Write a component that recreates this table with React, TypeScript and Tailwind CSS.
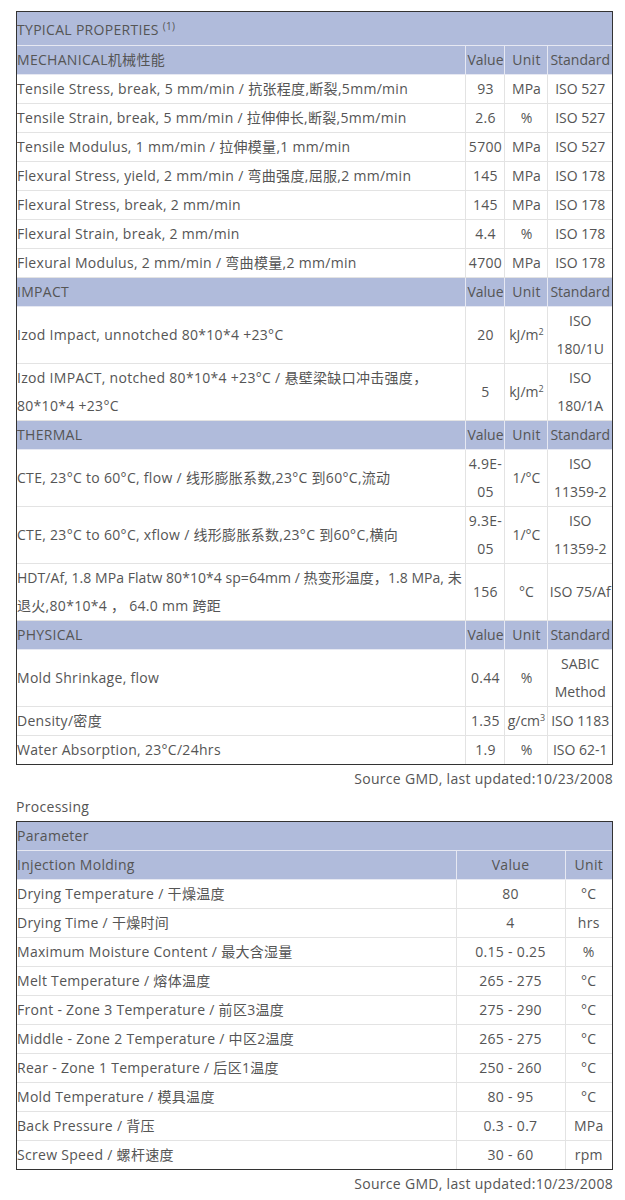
import React from 'react'

type Prop = { name: React.ReactNode; value: React.ReactNode; unit: React.ReactNode; std: React.ReactNode }

const font = { fontFamily: '"Open Sans", "Noto Sans CJK SC", sans-serif' }

const sections: { title: React.ReactNode; rows: Prop[] }[] = [
  {
    title: 'MECHANICAL机械性能',
    rows: [
      { name: 'Tensile Stress, break, 5 mm/min / 抗张程度,断裂,5mm/min', value: '93', unit: 'MPa', std: 'ISO 527' },
      { name: 'Tensile Strain, break, 5 mm/min / 拉伸伸长,断裂,5mm/min', value: '2.6', unit: '%', std: 'ISO 527' },
      { name: 'Tensile Modulus, 1 mm/min / 拉伸模量,1 mm/min', value: '5700', unit: 'MPa', std: 'ISO 527' },
      { name: 'Flexural Stress, yield, 2 mm/min / 弯曲强度,屈服,2 mm/min', value: '145', unit: 'MPa', std: 'ISO 178' },
      { name: 'Flexural Stress, break, 2 mm/min', value: '145', unit: 'MPa', std: 'ISO 178' },
      { name: 'Flexural Strain, break, 2 mm/min', value: '4.4', unit: '%', std: 'ISO 178' },
      { name: 'Flexural Modulus, 2 mm/min / 弯曲模量,2 mm/min', value: '4700', unit: 'MPa', std: 'ISO 178' },
    ],
  },
  {
    title: 'IMPACT',
    rows: [
      { name: 'Izod Impact, unnotched 80*10*4 +23°C', value: '20', unit: <>kJ/m<sup className="text-[9px]">2</sup></>, std: <>ISO<br />180/1U</> },
      { name: <>Izod IMPACT, notched 80*10*4 +23°C / 悬壁梁缺口冲击强度，<br />80*10*4 +23°C</>, value: '5', unit: <>kJ/m<sup className="text-[9px]">2</sup></>, std: <>ISO<br />180/1A</> },
    ],
  },
  {
    title: 'THERMAL',
    rows: [
      { name: 'CTE, 23°C to 60°C, flow / 线形膨胀系数,23°C 到60°C,流动', value: <>4.9E-<br />05</>, unit: '1/°C', std: <>ISO<br />11359-2</> },
      { name: 'CTE, 23°C to 60°C, xflow / 线形膨胀系数,23°C 到60°C,横向', value: <>9.3E-<br />05</>, unit: '1/°C', std: <>ISO<br />11359-2</> },
      {
        name: <><span className="tracking-[0.05px]">HDT/Af, 1.8 MPa Flatw 80*10*4 sp=64mm / 热变形温度，1.8 MPa, 未</span><br />退火,80*10*4 ， 64.0 mm 跨距</>,
        value: '156', unit: '°C', std: 'ISO 75/Af',
      },
    ],
  },
  {
    title: 'PHYSICAL',
    rows: [
      { name: 'Mold Shrinkage, flow', value: '0.44', unit: '%', std: <>SABIC<br />Method</> },
      { name: 'Density/密度', value: '1.35', unit: <>g/cm<sup className="text-[9px]">3</sup></>, std: 'ISO 1183' },
      { name: 'Water Absorption, 23°C/24hrs', value: '1.9', unit: '%', std: 'ISO 62-1' },
    ],
  },
]

const processing = [
  ['Drying Temperature / 干燥温度', '80', '°C'],
  ['Drying Time / 干燥时间', '4', 'hrs'],
  ['Maximum Moisture Content / 最大含湿量', '0.15 - 0.25', '%'],
  ['Melt Temperature / 熔体温度', '265 - 275', '°C'],
  ['Front - Zone 3 Temperature / 前区3温度', '275 - 290', '°C'],
  ['Middle - Zone 2 Temperature / 中区2温度', '265 - 275', '°C'],
  ['Rear - Zone 1 Temperature / 后区1温度', '250 - 260', '°C'],
  ['Mold Temperature / 模具温度', '80 - 95', '°C'],
  ['Back Pressure / 背压', '0.3 - 0.7', 'MPa'],
  ['Screw Speed / 螺杆速度', '30 - 60', 'rpm'],
]

const cell = 'border border-[#e3e3e3] p-0 align-middle'
const head = 'bg-[#b0bbdb] border border-[#e6e8f2] p-0 font-normal align-middle'

export default function App() {
  return (
    <div className="bg-white text-[#555] text-[14px] leading-[28px] tracking-[0.3px] pt-[11px] pl-[16px] pr-[12px]" style={font}>
      <div className="border border-[#333]">
        <table className="w-full border-collapse border-hidden table-fixed">
          <colgroup>
            <col />
            <col className="w-[39px]" />
            <col className="w-[43px]" />
            <col className="w-[64px]" />
          </colgroup>
          <tbody>
            <tr className="h-[33px]">
              <td colSpan={4} className={head + ' text-left pt-[4px]'}>
                TYPICAL PROPERTIES <sup className="text-[10px] leading-none">(1)</sup>
              </td>
            </tr>
            {sections.map((s, i) => (
              <React.Fragment key={i}>
                <tr>
                  <td className={head + ' text-left'}>{s.title}</td>
                  <td className={head + ' text-center tracking-normal'}>Value</td>
                  <td className={head + ' text-center'}>Unit</td>
                  <td className={head + ' text-center tracking-normal'}>Standard</td>
                </tr>
                {s.rows.map((r, j) => (
                  <tr key={j}>
                    <td className={cell + ' text-left whitespace-nowrap overflow-hidden'}>{r.name}</td>
                    <td className={cell + ' text-center'}>{r.value}</td>
                    <td className={cell + ' text-center whitespace-nowrap tracking-normal'}>{r.unit}</td>
                    <td className={cell + ' text-center whitespace-nowrap tracking-normal'}>{r.std}</td>
                  </tr>
                ))}
              </React.Fragment>
            ))}
          </tbody>
        </table>
      </div>
      <div className="text-right">Source GMD, last updated:10/23/2008</div>
      <div>Processing</div>
      <div className="border border-[#333]">
        <table className="w-full border-collapse border-hidden table-fixed">
          <colgroup>
            <col />
            <col className="w-[109px]" />
            <col className="w-[47px]" />
          </colgroup>
          <tbody>
            <tr>
              <td colSpan={3} className={head + ' text-left'}>Parameter</td>
            </tr>
            <tr>
              <td className={head + ' text-left'}>Injection Molding</td>
              <td className={head + ' text-center'}>Value</td>
              <td className={head + ' text-center'}>Unit</td>
            </tr>
            {processing.map((p, i) => (
              <tr key={i}>
                <td className={cell + ' text-left'}>{p[0]}</td>
                <td className={cell + ' text-center'}>{p[1]}</td>
                <td className={cell + ' text-center'}>{p[2]}</td>
              </tr>
            ))}
          </tbody>
        </table>
      </div>
      <div className="text-right">Source GMD, last updated:10/23/2008</div>
    </div>
  )
}
